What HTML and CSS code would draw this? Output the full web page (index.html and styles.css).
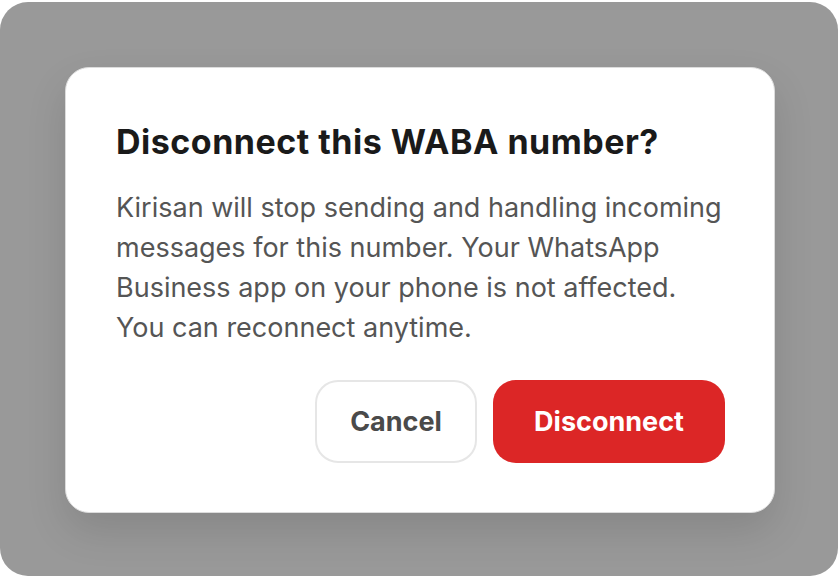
FILE: index.html
```html
<!DOCTYPE html>
<html lang="en">
<head>
    <meta charset="UTF-8">
    <meta name="viewport" content="width=device-width, initial-scale=1.0">
    <title>Disconnect WABA number</title>
    <link rel="stylesheet" href="styles.css">
</head>
<body>
<div class="backdrop">
    <div class="modal">
        <h2 class="modal-title">Disconnect this WABA number?</h2>
        <p class="modal-text">Kirisan will stop sending and handling incoming messages for this number. Your WhatsApp Business app on your phone is not affected. You can reconnect anytime.</p>
        <div class="modal-actions">
            <button type="button" class="btn btn-cancel">Cancel</button>
            <button type="button" class="btn btn-danger">Disconnect</button>
        </div>
    </div>
</div>
</body>
</html>
```

FILE: styles.css
```css
* {
    box-sizing: border-box;
}

body {
    margin: 0;
    background-color: #fff;
    font-family: Inter, 'Noto Sans', sans-serif;
}

.backdrop {
    width: 838px;
    height: 574px;
    margin-top: 2px;
    padding: 65px 0 0 65px;
    background-color: #999;
    border-radius: 28px;
    display: flex;
    align-items: flex-start;
}

.modal {
    width: 710px;
    height: 446px;
    background-color: #fff;
    border: 1px solid #dcdcdc;
    border-radius: 24px;
    padding: 54px 49px 49px 50px;
    box-shadow: 0 18px 40px rgba(0, 0, 0, 0.12);
    display: flex;
    flex-direction: column;
}

.modal-title {
    margin: 0;
    font-size: 34px;
    font-weight: 700;
    letter-spacing: 0.5px;
    color: #1a1a1a;
    line-height: 40px;
}

.modal-text {
    margin: 26px 0 0;
    font-size: 27px;
    line-height: 40px;
    color: #555;
}

.modal-actions {
    margin-top: auto;
    display: flex;
    justify-content: flex-end;
    gap: 16px;
}

.btn {
    height: 83px;
    border-radius: 23px;
    font-family: inherit;
    font-size: 27px;
    font-weight: 700;
    cursor: pointer;
}

.btn-cancel {
    width: 162px;
    background-color: #fff;
    border: 2px solid #e6e6e6;
    color: #4a4a4a;
}

.btn-danger {
    width: 232px;
    background-color: #dc2626;
    border: none;
    color: #fff;
}
```
